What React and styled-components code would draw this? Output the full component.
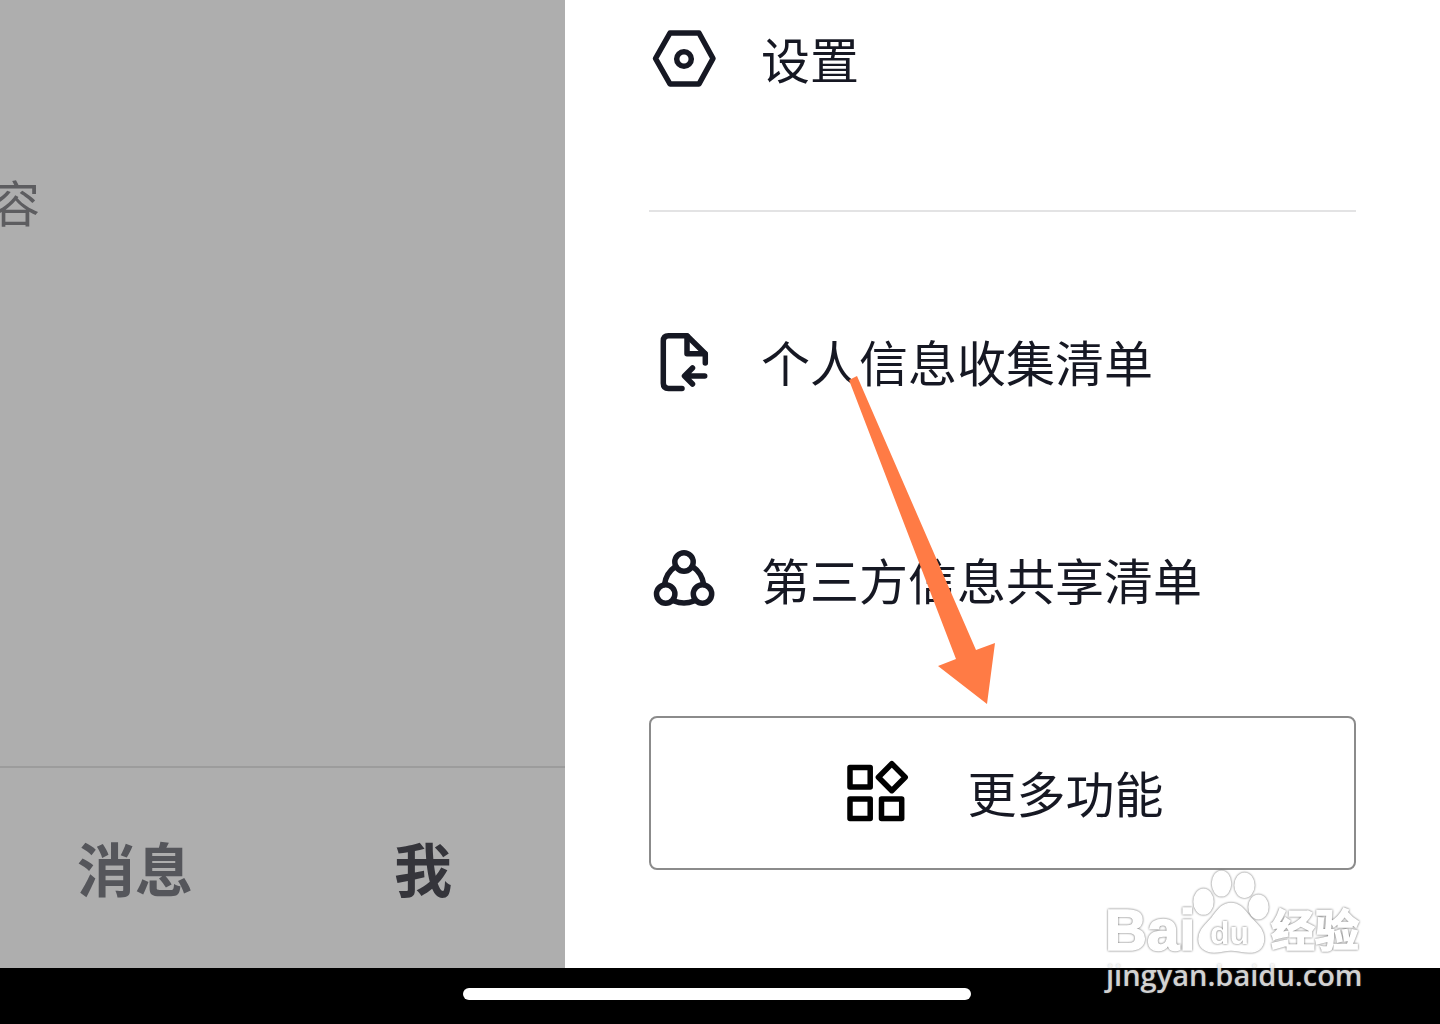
import React from "react";
import styled, { createGlobalStyle } from "styled-components";

const GlobalStyle = createGlobalStyle`
  * {
    box-sizing: border-box;
  }
  body {
    margin: 0;
    background: #000;
    font-family: "Noto Sans CJK SC", "Noto Sans", sans-serif;
  }
  button {
    font-family: inherit;
    color: inherit;
    background: none;
    border: none;
    padding: 0;
    cursor: pointer;
  }
`;

const SettingsIcon = () => (
  <Icon viewBox="0 0 70 70">
    <path d="M21 9H50L64 34.5L50 60H21L6.500 34.500Z" />
    <circle cx="35" cy="35" r="7.300" />
  </Icon>
);

const CollectIcon = () => (
  <Icon viewBox="0 0 70 70">
    <path d="M33 61.400H19.500Q14.300 61.400 14.300 56.200V14Q14.300 8.700 19.500 8.700H38L56.300 26.700V36" />
    <path d="M38 9V26.700H56" />
    <path d="M55.700 49H36.500M43.500 41L35.500 49L43.500 57" />
  </Icon>
);

const ShareIcon = () => (
  <Icon viewBox="0 0 70 70">
    <circle cx="35" cy="17" r="9.200" />
    <circle cx="16.700" cy="49" r="9.200" />
    <circle cx="53.500" cy="49" r="9.200" />
    <path d="M26.500 21.500Q17 28 15.500 39.500" />
    <path d="M43.500 21.500Q53 28 54.700 39.500" />
    <path d="M25 56Q35 60 45 56" />
  </Icon>
);

const MoreIcon = () => (
  <Icon viewBox="0 0 70 70" $color="#000">
    <rect x="7" y="9.500" width="20.200" height="19.500" />
    <rect x="7" y="41" width="20.200" height="19.500" />
    <rect x="38.500" y="41" width="20.200" height="19.500" />
    <path d="M48.800 5.700L62.200 19.200L48.800 32.700L35.400 19.200Z" />
  </Icon>
);

export default function App() {
  return (
    <Screen>
      <GlobalStyle />
      <Stage>
        <Profile>
          <Feed>
            <FeedText>容</FeedText>
          </Feed>
          <TabBar>
            <Tab>消息</Tab>
            <Tab $active>我</Tab>
          </TabBar>
        </Profile>
        <Drawer>
          <MenuItem>
            <SettingsIcon />
            <Label>设置</Label>
          </MenuItem>
          <Divider />
          <MenuGroup>
            <MenuItem>
              <CollectIcon />
              <Label>个人信息收集清单</Label>
            </MenuItem>
            <MenuItem>
              <ShareIcon />
              <Label>第三方信息共享清单</Label>
            </MenuItem>
          </MenuGroup>
          <MoreButton>
            <MoreIcon />
            <Label>更多功能</Label>
          </MoreButton>
          <Arrow viewBox="0 0 146 328" aria-hidden="true">
            <path d="M0 4L8 0L127 274L146 267L138 328L89 290L107 283Z" />
          </Arrow>
        </Drawer>
      </Stage>
      <HomeBar>
        <HomeIndicator />
      </HomeBar>
      <Watermark>
        <Logo viewBox="0 0 270 88">
          <text x="1" y="80" fontSize="58">Bai</text>
          <path d="M127 33.500C136 33.500 140 40 146 47C153 55 159.500 59 159.500 69C159.500 79 152 82 145 82C138 82 134 80 127 80C120 80 117 82 110 82C101 82 95 77 95 69C95 60 102 55 108 48C114 40 118 33.500 127 33.500Z" />
          <ellipse cx="117.500" cy="13.500" rx="9" ry="12.300" />
          <ellipse cx="140.500" cy="15.300" rx="9.400" ry="12" />
          <ellipse cx="99.500" cy="31.700" rx="9.400" ry="12.300" />
          <ellipse cx="154.500" cy="37" rx="9.400" ry="11.600" />
          <text x="106" y="74" fontSize="32" className="du">du</text>
          <text x="167" y="77" fontSize="44" className="cn">经验</text>
        </Logo>
        <Site>jingyan.baidu.com</Site>
      </Watermark>
    </Screen>
  );
}

const Screen = styled.div`
  position: relative;
  display: flex;
  flex-direction: column;
  min-height: 100vh;
  overflow: hidden;
`;

const Stage = styled.div`
  display: grid;
  flex: 1;
  grid-template-columns: minmax(0, 565fr) minmax(0, 875fr);
`;

const Profile = styled.section`
  display: flex;
  flex-direction: column;
  overflow: hidden;
  background: #aeaeae;
`;

const Feed = styled.div`
  flex: 1;
  padding-top: 165px;
`;

const FeedText = styled.p`
  display: flex;
  justify-content: flex-end;
  width: 40px;
  margin: 0;
  font-size: 49px;
  line-height: 72px;
  color: #5d5d60;
`;

const TabBar = styled.nav`
  display: flex;
  justify-content: flex-end;
  height: 202px;
  border-top: 2px solid #9c9c9c;
`;

const Tab = styled.button`
  flex: none;
  width: 288px;
  && {
    padding: 0 0 2px 4px;
    color: ${(props) => (props.$active ? "#35353b" : "#55565b")};
  }
  font-size: 58px;
  font-weight: 700;
`;

const Drawer = styled.aside`
  position: relative;
  padding: 9px 84px 98px;
  background: #fff;
  color: #161823;
`;

const MenuItem = styled.button`
  display: flex;
  align-items: center;
  gap: 42px;
  width: 100%;
  height: 100px;
  font-size: 49px;
  white-space: nowrap;
`;

const Label = styled.span`
  padding-bottom: 3px;
`;

const MenuGroup = styled.div`
  display: flex;
  flex-direction: column;
  gap: 118px;
`;

const Divider = styled.hr`
  height: 2px;
  margin: 101px 0 100px;
  border: none;
  background: #e3e3e4;
`;

const MoreButton = styled(MenuItem)`
  justify-content: center;
  gap: 54px;
  height: 154px;
  margin-top: 86px;
  && {
    padding-left: 2px;
    border: 2px solid #8b8b8b;
  }
  border-radius: 8px;
`;

const Icon = styled.svg`
  flex: none;
  width: 70px;
  height: 70px;
  fill: none;
  stroke: ${(props) => props.$color || "#161823"};
  stroke-width: 5.5;
  stroke-linecap: round;
  stroke-linejoin: round;
`;

const Arrow = styled.svg`
  position: absolute;
  top: 376px;
  left: 284px;
  width: 146px;
  height: 328px;
  fill: #ff7b45;
  pointer-events: none;
`;

const HomeBar = styled.footer`
  display: flex;
  justify-content: center;
  height: 56px;
  padding: 20px 6px 0 0;
  background: #000;
`;

const HomeIndicator = styled.div`
  width: 508px;
  height: 12px;
  border-radius: 6px;
  background: #fff;
`;

const Watermark = styled.div`
  position: absolute;
  right: 66px;
  bottom: 32px;
  width: 270px;
  pointer-events: none;
`;

const Logo = styled.svg`
  display: block;
  width: 270px;
  height: 88px;
  overflow: visible;
  fill: #fff;
  stroke: #fff;
  stroke-width: 1.6;
  font-family: "Liberation Sans", Arial, sans-serif;
  font-weight: 700;
  > * {
    filter: drop-shadow(0 0 1px #666);
  }
  .du {
    stroke: none;
  }
  .cn {
    font-family: "Noto Sans CJK SC", sans-serif;
  }
`;

const Site = styled.span`
  display: block;
  padding-left: 2px;
  font-family: "Open Sans", "Noto Sans", sans-serif;
  font-size: 29px;
  font-weight: 600;
  line-height: 34px;
  color: rgba(255, 255, 255, 0.8);
  text-shadow: 0 0 2px rgba(120, 120, 120, 0.5);
`;
